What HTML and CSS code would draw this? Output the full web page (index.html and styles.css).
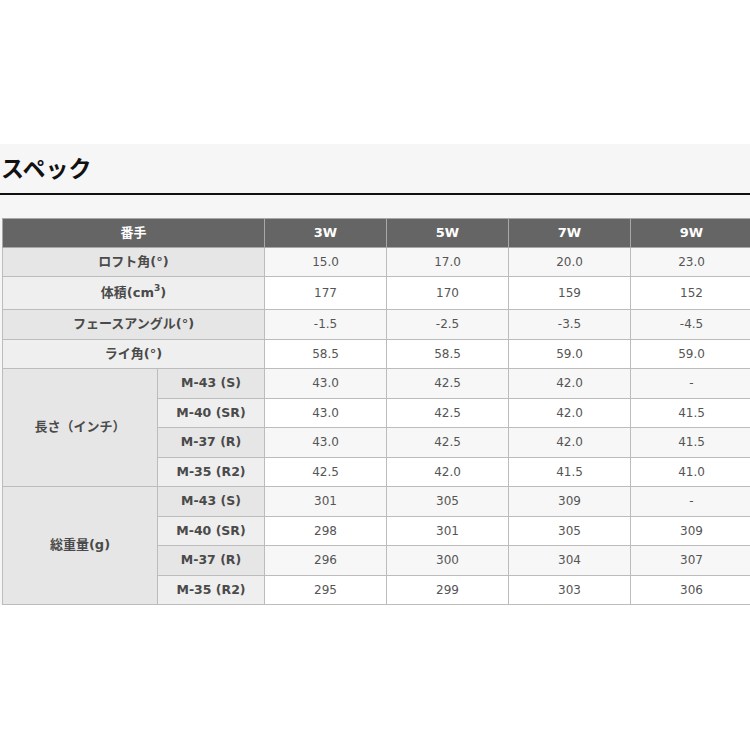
FILE: index.html
```html
<!DOCTYPE html>
<html lang="ja">
<head>
<meta charset="utf-8">
<title>スペック</title>
<link rel="stylesheet" href="styles.css">
</head>
<body>
<div class="page">
  <section class="spec">
    <h2 class="spec-title">スペック</h2>
    <div class="table-wrap">
      <table class="spec-table">
        <colgroup>
          <col class="c-label"><col class="c-sub"><col class="c-val"><col class="c-val"><col class="c-val"><col class="c-val">
        </colgroup>
        <thead>
          <tr><th colspan="2">番手</th><th>3W</th><th>5W</th><th>7W</th><th>9W</th></tr>
        </thead>
        <tbody>
          <tr class="odd"><th colspan="2">ロフト角(°)</th><td>15.0</td><td>17.0</td><td>20.0</td><td>23.0</td></tr>
          <tr class="even tall"><th colspan="2">体積(cm<sup>3</sup>)</th><td>177</td><td>170</td><td>159</td><td>152</td></tr>
          <tr class="odd"><th colspan="2">フェースアングル(°)</th><td>-1.5</td><td>-2.5</td><td>-3.5</td><td>-4.5</td></tr>
          <tr class="even"><th colspan="2">ライ角(°)</th><td>58.5</td><td>58.5</td><td>59.0</td><td>59.0</td></tr>
          <tr class="odd"><th rowspan="4" class="group">長さ（インチ）</th><th class="sub">M-43 (S)</th><td>43.0</td><td>42.5</td><td>42.0</td><td>-</td></tr>
          <tr class="even"><th class="sub">M-40 (SR)</th><td>43.0</td><td>42.5</td><td>42.0</td><td>41.5</td></tr>
          <tr class="odd"><th class="sub">M-37 (R)</th><td>43.0</td><td>42.5</td><td>42.0</td><td>41.5</td></tr>
          <tr class="even"><th class="sub">M-35 (R2)</th><td>42.5</td><td>42.0</td><td>41.5</td><td>41.0</td></tr>
          <tr class="odd"><th rowspan="4" class="group">総重量(g)</th><th class="sub">M-43 (S)</th><td>301</td><td>305</td><td>309</td><td>-</td></tr>
          <tr class="even"><th class="sub">M-40 (SR)</th><td>298</td><td>301</td><td>305</td><td>309</td></tr>
          <tr class="odd"><th class="sub">M-37 (R)</th><td>296</td><td>300</td><td>304</td><td>307</td></tr>
          <tr class="even"><th class="sub">M-35 (R2)</th><td>295</td><td>299</td><td>303</td><td>306</td></tr>
        </tbody>
      </table>
    </div>
  </section>
</div>
</body>
</html>
```

FILE: styles.css
```css
html, body {
  margin: 0;
  padding: 0;
  background: #ffffff;
  overflow: hidden;
}

.page {
  padding-top: 144px;
  font-family: "DejaVu Sans", "Noto Sans CJK JP", sans-serif;
}

.spec {
  background: #f6f6f6;
}

.spec-title {
  margin: 0;
  padding: 11px 0 14px 1px;
  font-family: "Noto Sans CJK JP", sans-serif;
  font-size: 23px;
  line-height: 24px;
  font-weight: 700;
  color: #111;
  border-bottom: 2px solid #111;
}

.table-wrap {
  padding: 23px 0 0 2px;
  overflow: hidden;
}

.spec-table {
  border-collapse: collapse;
  table-layout: fixed;
  width: 750px;
  font-size: 12px;
}

.c-label { width: 155px; }
.c-sub { width: 107px; }
.c-val { width: 122px; }

.spec-table th,
.spec-table td {
  border: 1px solid #bcbcbc;
  text-align: center;
  vertical-align: middle;
  padding: 6px 4px;
  line-height: 16.5px;
}

.spec-table thead th {
  background: #656565;
  color: #ffffff;
  font-weight: 700;
  font-size: 13px;
  border-color: #a8a8a8;
  padding: 6px 4px 5px;
}

.spec-table tbody th {
  font-family: "DejaVu Sans", "Noto Sans CJK JP", sans-serif;
  font-weight: 700;
  font-size: 13px;
  color: #4a4a4a;
}

.spec-table tbody th.sub {
  font-size: 12.5px;
}

.spec-table tbody td {
  color: #555555;
  font-weight: 400;
}

.spec-table tr.tall th,
.spec-table tr.tall td {
  padding-top: 8px;
  padding-bottom: 7.5px;
}

.spec-table tr.odd th { background: #e6e6e6; }
.spec-table tr.even th { background: #efefef; }
.spec-table tr.odd td { background: #f7f7f7; }
.spec-table tr.even td { background: #ffffff; }
.spec-table tbody th.group { background: #e6e6e6; }

.spec-table sup {
  font-size: 9px;
  line-height: 0;
  vertical-align: 6px;
}
```
